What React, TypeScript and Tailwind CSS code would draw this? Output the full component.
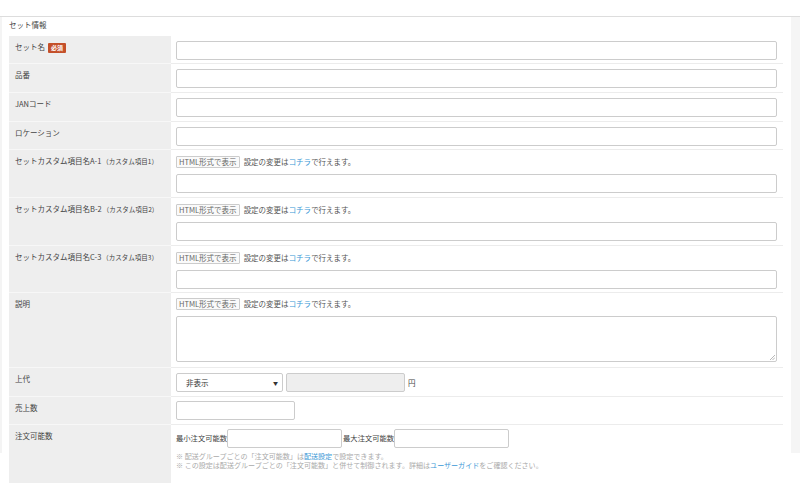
import type { ReactNode } from "react";

const font = { fontFamily: '"Meiryo", "Noto Sans CJK JP", "Liberation Sans", sans-serif' };

function Row({ label, sub, badge, h, children }: { label: string; sub?: string; badge?: boolean; h: string; children: ReactNode }) {
  return (
    <div className={`flex ${h}`}>
      <div className="w-[162px] shrink-0 bg-[#eeeeee] border-b border-[#f7f7f7] pl-[6px] pt-[6px] text-[7.5px] text-[#444] leading-[10px]">
        <span>{label}</span>
        {sub && <span className="ml-[1px] text-[6.5px]">{sub}</span>}
        {badge && (
          <span className="ml-[3px] inline-block bg-[#c4502a] text-white text-[6px] font-bold px-[3px] leading-[10px] rounded-[1px] align-middle">
            必須
          </span>
        )}
      </div>
      <div className="flex-1 border-b border-[#ececec] pl-[5px] pr-[6px]">{children}</div>
    </div>
  );
}

function TextInput({ className = "" }: { className?: string }) {
  return <div className={`h-[19px] border border-[#cccccc] rounded-[2px] bg-white ${className}`} />;
}

function HtmlNote() {
  return (
    <div className="flex items-center gap-[4px] text-[7.5px] text-[#555]">
      <span className="border border-[#cccccc] rounded-[1px] bg-[#fafafa] px-[2px] leading-[10px] text-[#666]">HTML形式で表示</span>
      <span>
        設定の変更は<span className="text-[#3a98d6]">コチラ</span>で行えます。
      </span>
    </div>
  );
}

export default function App() {
  return (
    <div className="relative w-[800px] h-[483px] overflow-hidden bg-white" style={font}>
      <div className="absolute left-0 top-[17px] w-[2px] h-[436px] bg-[#f4f4f4]" />
      <div className="absolute right-0 top-[17px] w-[9px] h-[436px] bg-[#f5f5f5]" />
      <div className="h-[16px]" />
      <div className="border-t border-[#dddddd] pl-[9px] pr-[17px]">
        <div className="h-[19px] pt-[3px] text-[7.5px] text-[#444] leading-[10px]">セット情報</div>
        <Row label="セット名" badge h="h-[28px]">
          <TextInput className="mt-[5px]" />
        </Row>
        <Row label="品番" h="h-[29px]">
          <TextInput className="mt-[5px]" />
        </Row>
        <Row label="JANコード" h="h-[29px]">
          <TextInput className="mt-[5px]" />
        </Row>
        <Row label="ロケーション" h="h-[28px]">
          <TextInput className="mt-[5px]" />
        </Row>
        {["A-1", "B-2", "C-3"].map((k, i) => (
          <Row key={k} label={`セットカスタム項目名${k}`} sub={`（カスタム項目${i + 1}）`} h={i === 2 ? "h-[47px]" : "h-[48px]"}>
            <div className="pt-[6px]">
              <HtmlNote />
            </div>
            <TextInput className="mt-[6px]" />
          </Row>
        ))}
        <Row label="説明" h="h-[75px]">
          <div className="pt-[5px]">
            <HtmlNote />
          </div>
          <div className="relative mt-[6px] h-[46px] border border-[#cccccc] rounded-[2px]">
            <svg className="absolute right-[1px] bottom-[1px]" width="5" height="5" viewBox="0 0 5 5">
              <path d="M5 0 L0 5 M5 2.5 L2.5 5" stroke="#999" strokeWidth="0.7" />
            </svg>
          </div>
        </Row>
        <Row label="上代" h="h-[29px]">
          <div className="mt-[5px] flex items-center gap-[3px]">
            <div className="flex h-[19px] w-[107px] items-center justify-between border border-[#cccccc] rounded-[2px] pl-[9px] pr-[4px] text-[7.5px] text-[#333]">
              <span>非表示</span>
              <span className="text-[5px] text-[#333]">▼</span>
            </div>
            <div className="h-[19px] w-[119px] border border-[#cccccc] rounded-[2px] bg-[#eeeeee]" />
            <span className="text-[7.5px] text-[#444]">円</span>
          </div>
        </Row>
        <Row label="売上数" h="h-[28px]">
          <TextInput className="mt-[4px] w-[119px]" />
        </Row>
        <Row label="注文可能数" h="h-[70px]">
          <div className="mt-[4px] flex items-center text-[7.3px] text-[#444]">
            <span>最小注文可能数</span>
            <div className="h-[19px] w-[115px] border border-[#cccccc] rounded-[2px]" />
            <span className="ml-[1px]">最大注文可能数</span>
            <div className="h-[19px] w-[115px] border border-[#cccccc] rounded-[2px]" />
          </div>
          <div className="mt-[4px] text-[7.05px] leading-[9px] text-[#aaa]">
            <div>
              ※ 配送グループごとの「注文可能数」は<span className="text-[#3a98d6]">配送設定</span>で設定できます。
            </div>
            <div>
              ※ この設定は配送グループごとの「注文可能数」と併せて制御されます。詳細は<span className="text-[#3a98d6]">ユーザーガイド</span>をご確認ください。
            </div>
          </div>
        </Row>
      </div>
    </div>
  );
}
